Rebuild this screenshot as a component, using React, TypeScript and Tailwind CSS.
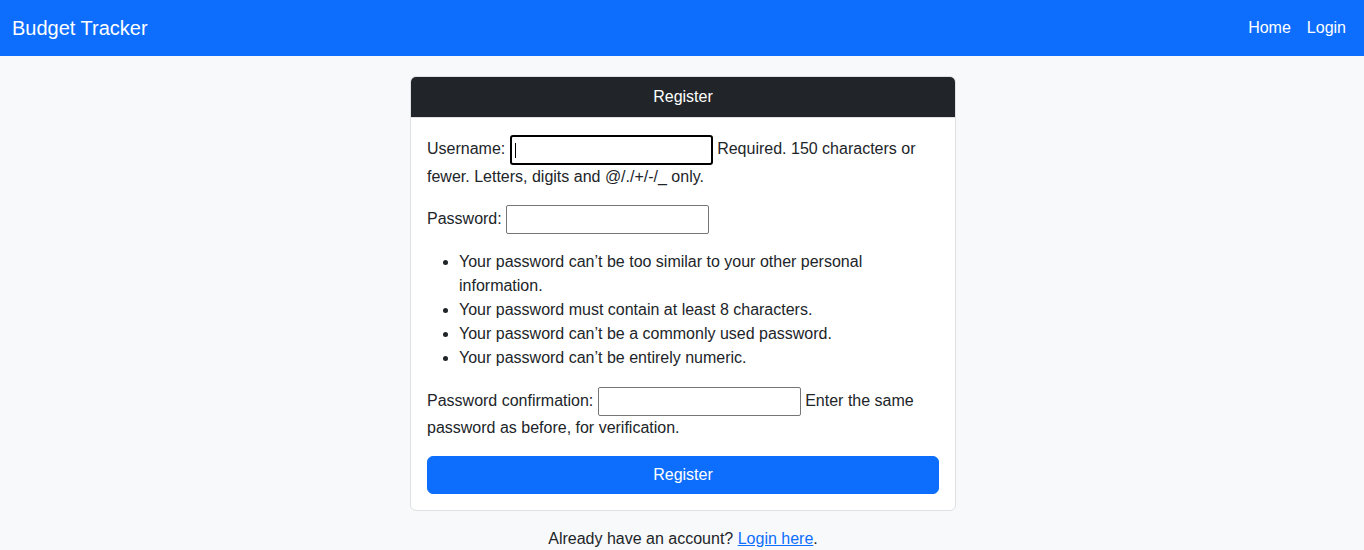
const font = { fontFamily: '"Liberation Sans", Arial, sans-serif' };

function TextInput({ focused = false }: { focused?: boolean }) {
  if (focused) {
    return (
      <span className="relative inline-block h-[30px] w-[203px] rounded-[3px] border-2 border-black bg-white align-middle">
        <span className="absolute left-[3px] top-[6px] h-[15px] w-px bg-black" />
      </span>
    );
  }
  return (
    <span className="inline-block h-[29px] w-[203px] rounded-[2px] border border-[#767676] bg-white align-middle" />
  );
}

export default function App() {
  return (
    <div className="min-h-screen bg-[#f8f9fa] text-base leading-6 text-[#212529]" style={font}>
      <nav className="flex h-14 items-center justify-between bg-[#0d6efd] pl-3 pr-[10px]">
        <a className="text-[20px] leading-[30px] text-white">Budget Tracker</a>
        <div className="flex">
          <a className="px-2 text-white">Home</a>
          <a className="px-2 text-white">Login</a>
        </div>
      </nav>

      <div className="flex justify-center pl-[2px]">
        <div className="mt-5 w-[546px]">
          <div className="overflow-hidden rounded-md border border-[#dfe0e1] bg-white">
            <div className="border-b border-[#dfe0e1] bg-[#212529] px-4 py-2 text-center text-white">
              Register
            </div>
            <div className="px-4 pb-4 pt-[17px]">
              <p className="mb-4">
                Username: <TextInput focused /> <span>Required. 150 characters or fewer. Letters, digits and @/./+/-/_ only.</span>
              </p>
              <p className="mb-4">
                Password: <TextInput />
              </p>
              <ul className="mb-[17px] list-disc pl-8">
                <li>Your password can’t be too similar to your other personal information.</li>
                <li>Your password must contain at least 8 characters.</li>
                <li>Your password can’t be a commonly used password.</li>
                <li>Your password can’t be entirely numeric.</li>
              </ul>
              <p className="mb-4">
                Password confirmation: <TextInput /> <span>Enter the same password as before, for verification.</span>
              </p>
              <button className="block w-full rounded-md border border-[#0d6efd] bg-[#0d6efd] px-3 py-1.5 text-white">
                Register
              </button>
            </div>
          </div>
          <p className="mt-4 text-center">
            Already have an account? <a className="text-[#0d6efd] underline">Login here</a>.
          </p>
        </div>
      </div>
    </div>
  );
}
